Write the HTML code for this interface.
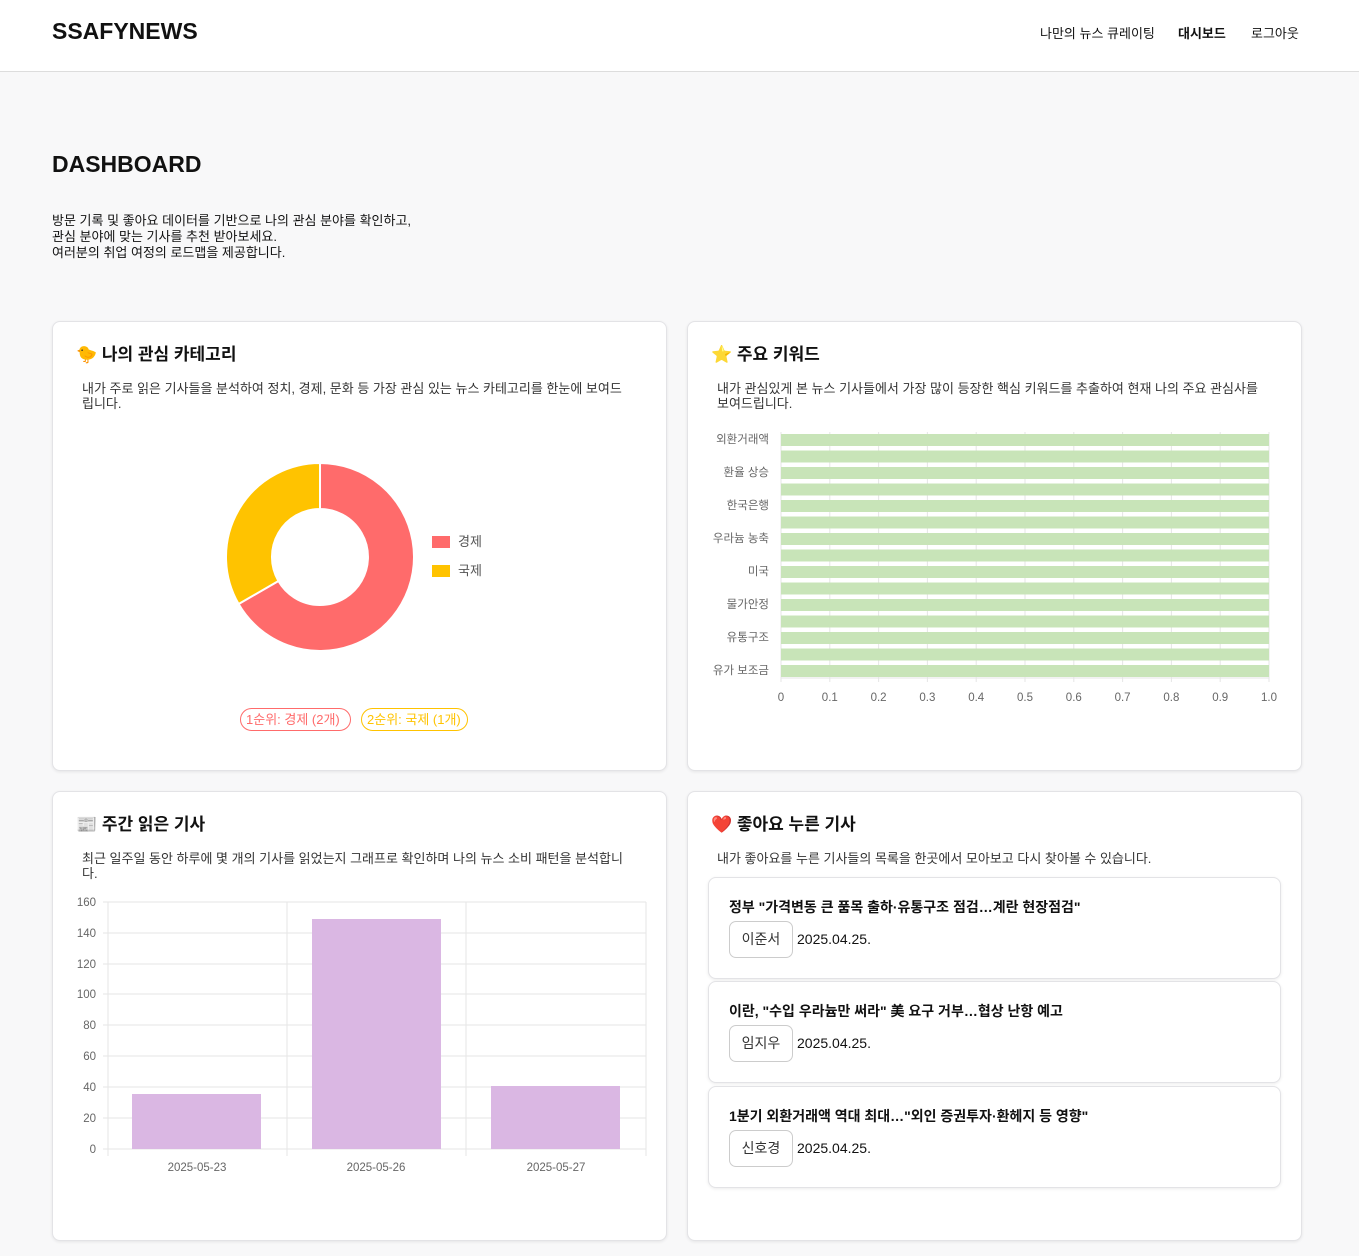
<!DOCTYPE html>
<html><head><meta charset="utf-8"><style>
*{margin:0;padding:0;box-sizing:border-box}
body{width:1359px;height:1256px;background:#f8f8f9;font-family:"Liberation Sans","Noto Sans CJK KR",sans-serif;color:#111;position:relative;overflow:hidden}
.a{position:absolute;white-space:nowrap}
header{position:absolute;left:0;top:0;width:1359px;height:72px;background:#fff;border-bottom:1px solid #ddd}
.card{position:absolute;background:#fff;border:1px solid #e3e3e6;border-radius:8px;box-shadow:0 1px 3px rgba(0,0,0,.08)}
.h{font-size:17px;font-weight:bold}
.d{font-size:13px;color:#333;line-height:15px;white-space:normal}
.art{position:absolute;left:708px;width:573px;height:102px;background:#fff;border:1px solid #e3e3e6;border-radius:8px;box-shadow:0 1px 3px rgba(0,0,0,.08)}
.art b{position:absolute;left:20px;top:19px;font-size:14px}
.tag{position:absolute;left:20px;top:43px;width:64px;height:37px;border:1px solid #ccc;border-radius:7px;font-size:14px;color:#333;text-align:center;line-height:35px}
.dt{position:absolute;left:88px;top:53px;font-size:14px}
</style></head><body>
<header>
<div class="a" style="left:52px;top:18px;font-size:23px;font-weight:bold">SSAFYNEWS</div>
<div class="a" style="left:1040px;top:23px;font-size:13px">나만의 뉴스 큐레이팅</div>
<div class="a" style="left:1178px;top:23px;font-size:13px;font-weight:bold">대시보드</div>
<div class="a" style="left:1251px;top:23px;font-size:13px">로그아웃</div>
</header>
<div class="a" style="left:52px;top:151px;font-size:23px;font-weight:bold">DASHBOARD</div>
<div class="a" style="left:52px;top:213px;font-size:13px;line-height:16px">방문 기록 및 좋아요 데이터를 기반으로 나의 관심 분야를 확인하고,<br>관심 분야에 맞는 기사를 추천 받아보세요.<br>여러분의 취업 여정의 로드맵을 제공합니다.</div>

<div class="card" style="left:52px;top:321px;width:615px;height:450px"></div>
<div class="card" style="left:687px;top:321px;width:615px;height:450px"></div>
<div class="card" style="left:52px;top:791px;width:615px;height:450px"></div>
<div class="card" style="left:687px;top:791px;width:615px;height:450px"></div>

<div class="a h" style="left:76px;top:340px">🐤 나의 관심 카테고리</div>
<div class="a d" style="left:82px;top:381px;width:548px">내가 주로 읽은 기사들을 분석하여 정치, 경제, 문화 등 가장 관심 있는 뉴스 카테고리를 한눈에 보여드립니다.</div>
<svg class="a" style="left:0;top:0" width="700" height="780">
<path d="M320 463 A94 94 0 1 1 238.6 604 L278.4 581 A48 48 0 1 0 320 509 Z" fill="#ff6b6b" stroke="#fff" stroke-width="2"/>
<path d="M238.6 604 A94 94 0 0 1 320 463 L320 509 A48 48 0 0 0 278.4 581 Z" fill="#ffc300" stroke="#fff" stroke-width="2"/>
<rect x="432" y="536" width="18" height="12" fill="#ff6b6b"/>
<rect x="432" y="565" width="18" height="12" fill="#ffc300"/>
<text x="458" y="546" font-size="13" fill="#555" font-family="Liberation Sans,Noto Sans CJK KR,sans-serif">경제</text>
<text x="458" y="575" font-size="13" fill="#555" font-family="Liberation Sans,Noto Sans CJK KR,sans-serif">국제</text>
<rect x="240.5" y="708.5" width="110" height="22" rx="11" fill="none" stroke="#ff6b6b"/>
<rect x="361.5" y="708.5" width="106" height="22" rx="11" fill="none" stroke="#ffc300"/>
<text x="246" y="724" font-size="13" fill="#ff6b6b" font-family="Liberation Sans,Noto Sans CJK KR,sans-serif">1순위: 경제 (2개)</text>
<text x="367" y="724" font-size="13" fill="#ffc300" font-family="Liberation Sans,Noto Sans CJK KR,sans-serif">2순위: 국제 (1개)</text>
</svg>

<div class="a h" style="left:711px;top:340px">⭐ 주요 키워드</div>
<div class="a d" style="left:717px;top:381px;width:552px">내가 관심있게 본 뉴스 기사들에서 가장 많이 등장한 핵심 키워드를 추출하여 현재 나의 주요 관심사를 보여드립니다.</div>
<svg class="a" style="left:690px;top:420px" width="610" height="300" font-family="Liberation Sans,Noto Sans CJK KR,sans-serif" font-size="11.5" fill="#666">
<g stroke="#e5e5e5">
<line x1="91" y1="12" x2="91" y2="262"/><line x1="139.8" y1="12" x2="139.8" y2="262"/><line x1="188.6" y1="12" x2="188.6" y2="262"/><line x1="237.4" y1="12" x2="237.4" y2="262"/><line x1="286.2" y1="12" x2="286.2" y2="262"/><line x1="335" y1="12" x2="335" y2="262"/><line x1="383.8" y1="12" x2="383.8" y2="262"/><line x1="432.6" y1="12" x2="432.6" y2="262"/><line x1="481.4" y1="12" x2="481.4" y2="262"/><line x1="530.2" y1="12" x2="530.2" y2="262"/><line x1="579" y1="12" x2="579" y2="262"/>
<line x1="91" y1="258" x2="579" y2="258"/>
</g>
<g fill="#c8e4b8">
<rect x="91" y="14" width="488" height="12"/><rect x="91" y="30.5" width="488" height="12"/><rect x="91" y="47" width="488" height="12"/><rect x="91" y="63.5" width="488" height="12"/><rect x="91" y="80" width="488" height="12"/><rect x="91" y="96.5" width="488" height="12"/><rect x="91" y="113" width="488" height="12"/><rect x="91" y="129.5" width="488" height="12"/><rect x="91" y="146" width="488" height="12"/><rect x="91" y="162.5" width="488" height="12"/><rect x="91" y="179" width="488" height="12"/><rect x="91" y="195.5" width="488" height="12"/><rect x="91" y="212" width="488" height="12"/><rect x="91" y="228.5" width="488" height="12"/><rect x="91" y="245" width="488" height="12"/>
</g>
<g text-anchor="end">
<text x="79" y="23">외환거래액</text><text x="79" y="56">환율 상승</text><text x="79" y="89">한국은행</text><text x="79" y="122">우라늄 농축</text><text x="79" y="155">미국</text><text x="79" y="188">물가안정</text><text x="79" y="221">유통구조</text><text x="79" y="254">유가 보조금</text>
</g>
<g text-anchor="middle">
<text x="91" y="281">0</text><text x="139.8" y="281">0.1</text><text x="188.6" y="281">0.2</text><text x="237.4" y="281">0.3</text><text x="286.2" y="281">0.4</text><text x="335" y="281">0.5</text><text x="383.8" y="281">0.6</text><text x="432.6" y="281">0.7</text><text x="481.4" y="281">0.8</text><text x="530.2" y="281">0.9</text><text x="579" y="281">1.0</text>
</g>
</svg>

<div class="a h" style="left:76px;top:810px">📰 주간 읽은 기사</div>
<div class="a d" style="left:82px;top:851px;width:550px">최근 일주일 동안 하루에 몇 개의 기사를 읽었는지 그래프로 확인하며 나의 뉴스 소비 패턴을 분석합니다.</div>
<svg class="a" style="left:60px;top:890px" width="600" height="300" font-family="Liberation Sans,sans-serif" font-size="11.5" fill="#666">
<g stroke="#e5e5e5">
<line x1="43" y1="12" x2="586" y2="12"/><line x1="43" y1="43" x2="586" y2="43"/><line x1="43" y1="74" x2="586" y2="74"/><line x1="43" y1="104" x2="586" y2="104"/><line x1="43" y1="135" x2="586" y2="135"/><line x1="43" y1="166" x2="586" y2="166"/><line x1="43" y1="197" x2="586" y2="197"/><line x1="43" y1="228" x2="586" y2="228"/><line x1="43" y1="259" x2="586" y2="259"/>
<line x1="48" y1="12" x2="48" y2="266"/><line x1="227" y1="12" x2="227" y2="266"/><line x1="406" y1="12" x2="406" y2="266"/><line x1="586" y1="12" x2="586" y2="266"/>
</g>
<g fill="#dab7e3">
<rect x="72" y="204" width="129" height="55"/><rect x="252" y="29" width="129" height="230"/><rect x="431" y="196" width="129" height="63"/>
</g>
<g text-anchor="end">
<text x="36" y="16">160</text><text x="36" y="47">140</text><text x="36" y="78">120</text><text x="36" y="108">100</text><text x="36" y="139">80</text><text x="36" y="170">60</text><text x="36" y="201">40</text><text x="36" y="232">20</text><text x="36" y="263">0</text>
</g>
<g text-anchor="middle"><text x="137" y="281">2025-05-23</text><text x="316" y="281">2025-05-26</text><text x="496" y="281">2025-05-27</text></g>
</svg>

<div class="a h" style="left:711px;top:810px">❤️ 좋아요 누른 기사</div>
<div class="a d" style="left:717px;top:851px">내가 좋아요를 누른 기사들의 목록을 한곳에서 모아보고 다시 찾아볼 수 있습니다.</div>
<div class="art" style="top:877px"><b>정부 "가격변동 큰 품목 출하·유통구조 점검…계란 현장점검"</b><div class="tag">이준서</div><div class="dt">2025.04.25.</div></div>
<div class="art" style="top:981px"><b>이란, "수입 우라늄만 써라" 美 요구 거부…협상 난항 예고</b><div class="tag">임지우</div><div class="dt">2025.04.25.</div></div>
<div class="art" style="top:1086px"><b>1분기 외환거래액 역대 최대…"외인 증권투자·환헤지 등 영향"</b><div class="tag">신호경</div><div class="dt">2025.04.25.</div></div>
</body></html>
